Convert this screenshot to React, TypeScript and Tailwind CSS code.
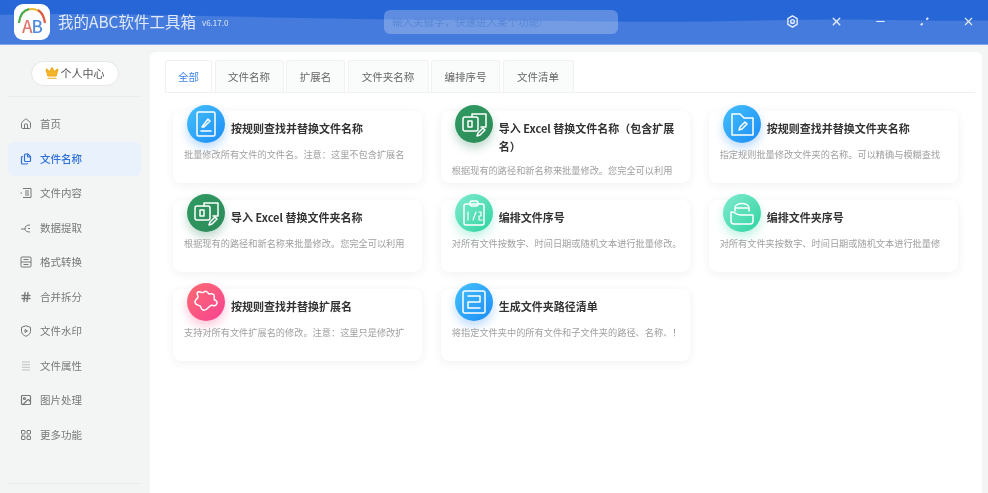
import type { ReactNode } from 'react'
import { ChevronDown, Crown, Hash, Home, Image, LayoutGrid, Minus, X, Files } from 'lucide-react'

const fontStack = "[font-family:'Noto_Sans_CJK_SC','Noto_Sans',sans-serif]"

const navItems = [
  { label: '首页', icon: <Home size={12} /> },
  { label: '文件名称', icon: <Files size={12} strokeWidth={2.4} />, active: true },
  {
    label: '文件内容',
    icon: (
      <svg viewBox="0 0 12 12" className="w-3 h-3" fill="none" stroke="currentColor">
        <path d="M3 1.5h8v9H3M5 4h4M5 6h4M5 8h4M0.5 6h1.5" />
      </svg>
    ),
  },
  {
    label: '数据提取',
    icon: (
      <svg viewBox="0 0 12 12" className="w-3 h-3" fill="none" stroke="currentColor">
        <path d="M1 7h4M5 7c0-3 2-4 5-4M5 7c0 2 2 3 5 3M8 6.500h2" />
      </svg>
    ),
  },
  {
    label: '格式转换',
    icon: (
      <svg viewBox="0 0 12 12" className="w-3 h-3" fill="none" stroke="currentColor">
        <rect x="1" y="1" width="10" height="10" rx="1" />
        <path d="M1 6h10M3.500 3.500h5M3.500 8.500h5" />
      </svg>
    ),
  },
  { label: '合并拆分', icon: <Hash size={12} strokeWidth={2.6} /> },
  {
    label: '文件水印',
    icon: (
      <svg viewBox="0 0 12 12" className="w-3 h-3" fill="none" stroke="currentColor">
        <path d="M6 .8l4.500 1.500v4c0 2.500-2 4-4.500 5-2.500-1-4.500-2.500-4.500-5v-4z" />
        <path d="M5 4.500l2.500 1.500L5 7.500z" />
      </svg>
    ),
  },
  {
    label: '文件属性',
    icon: (
      <svg viewBox="0 0 12 12" className="w-3 h-3 opacity-40" fill="none" stroke="currentColor">
        <path d="M2 2h8M2 4.700h8M2 7.300h8M2 10h8" />
      </svg>
    ),
  },
  { label: '图片处理', icon: <Image size={12} strokeWidth={2.4} /> },
  { label: '更多功能', icon: <LayoutGrid size={12} /> },
]

const tabs = [
  { label: '全部', width: 'w-[47px]' },
  { label: '文件名称', width: 'w-[69px]' },
  { label: '扩展名', width: 'w-[59px]' },
  { label: '文件夹名称', width: 'w-[81px]' },
  { label: '编排序号', width: 'w-[69px]' },
  { label: '文件清单', width: 'w-[71px]' },
]

const stroke = { fill: 'none', stroke: '#fff', strokeWidth: 1.5, strokeLinecap: 'round', strokeLinejoin: 'round' } as const

const blue = 'bg-gradient-to-br from-[#45c0fb] to-[#1c8cf5] shadow-[0_5px_10px_rgba(40,140,245,0.3)]'
const green = 'bg-gradient-to-br from-[#2f9a62] to-[#2c8a58] shadow-[0_5px_10px_rgba(40,130,90,0.3)]'
const mint = 'bg-gradient-to-br from-[#7debd0] to-[#22d3a0] shadow-[0_5px_10px_rgba(50,215,170,0.3)]'
const pink = 'bg-gradient-to-br from-[#fb6a6e] to-[#f83f93] shadow-[0_5px_10px_rgba(250,70,130,0.3)]'

const cards: { title: string; desc: string; color: string; icon: ReactNode }[] = [
  {
    title: '按规则查找并替换文件名称',
    desc: '批量修改所有文件的文件名。注意：这里不包含扩展名',
    color: blue,
    icon: (
      <>
        <rect x="10" y="7" width="18" height="24" rx="1.500" {...stroke} />
        <path d="M14 26h10M15 22l6-8 2 2-6 6z" {...stroke} />
      </>
    ),
  },
  {
    title: '导入 Excel 替换文件名称（包含扩展名）',
    desc: '根据现有的路径和新名称来批量修改。您完全可以利用',
    color: green,
    icon: (
      <>
        <path d="M17 12V9h14v13h-5" {...stroke} />
        <rect x="8" y="12" width="15" height="14" rx="2" {...stroke} />
        <path d="M13 16h4v6h-4zM22 31l3-1 5-5-2-2-5 5z" {...stroke} />
      </>
    ),
  },
  {
    title: '按规则查找并替换文件夹名称',
    desc: '指定规则批量修改文件夹的名称。可以精确与模糊查找',
    color: blue,
    icon: (
      <>
        <path d="M9 9h8l4 4h9v17H9z" {...stroke} />
        <path d="M16 25l1-3 5-5 2 2-5 5z" {...stroke} />
      </>
    ),
  },
  {
    title: '导入 Excel 替换文件夹名称',
    desc: '根据现有的路径和新名称来批量修改。您完全可以利用',
    color: green,
    icon: (
      <>
        <path d="M17 12V9h14v13h-5" {...stroke} />
        <rect x="8" y="12" width="15" height="14" rx="2" {...stroke} />
        <path d="M13 16h4v6h-4zM22 31l3-1 5-5-2-2-5 5z" {...stroke} />
      </>
    ),
  },
  {
    title: '编排文件序号',
    desc: '对所有文件按数字、时间日期或随机文本进行批量修改。',
    color: mint,
    icon: (
      <>
        <rect x="9" y="10" width="20" height="21" rx="2" {...stroke} />
        <rect x="15" y="7" width="8" height="5" rx="2" {...stroke} />
        <path d="M13 18v8M18 26l3-8M24 18h2v4h-2v4h3" {...stroke} strokeWidth={1.2} />
      </>
    ),
  },
  {
    title: '编排文件夹序号',
    desc: '对所有文件夹按数字、时间日期或随机文本进行批量修',
    color: mint,
    icon: (
      <>
        <path d="M8 18c6 0 4 3 10 3h12v6a3 3 0 0 1-3 3H11a3 3 0 0 1-3-3z" {...stroke} />
        <path d="M12 17v-3c0-6 14-6 14 0v3M12 14h14" {...stroke} />
      </>
    ),
  },
  {
    title: '按规则查找并替换扩展名',
    desc: '支持对所有文件扩展名的修改。注意：这里只是修改扩',
    color: pink,
    icon: (
      <path
        d="M17 9c2-2 4 1 5 2 2 0 4-1 5 1s-1 4 1 5 3 3 1 5-4-1-6 1-4 5-7 4-1-3-3-4-5-1-5-4 3-3 3-5-2-4 0-5 5 2 6 0z"
        {...stroke}
      />
    ),
  },
  {
    title: '生成文件夹路径清单',
    desc: '将指定文件夹中的所有文件和子文件夹的路径、名称、！',
    color: blue,
    icon: (
      <>
        <rect x="8" y="8" width="22" height="22" rx="2" {...stroke} />
        <path d="M13 13h12v6H13v6h12" {...stroke} />
      </>
    ),
  },
]

function Logo() {
  return (
    <div className="relative w-9 h-9 rounded-[9px] bg-white overflow-hidden">
      <svg viewBox="0 0 36 36" className="absolute inset-0 w-full h-full">
        <path d="M5 19C6 9 12 5 18 5s12 4 13 14" fill="none" stroke="#e9b93a" strokeWidth="2" />
        <path d="M5 19C6 9 10 6 15 5" fill="none" stroke="#3eae5d" strokeWidth="2" />
        <path d="M24 6c4 2 6 7 7 13" fill="none" stroke="#e2574c" strokeWidth="2" />
      </svg>
      <span className="absolute inset-x-0 top-[12px] text-center text-[17px] leading-[20px] font-medium tracking-[-1px]">
        <span className="text-[#e2776c]">A</span>
        <span className="text-[#4f8be0]">B</span>
      </span>
    </div>
  )
}

function Card({ title, desc, color, icon }: (typeof cards)[number]) {
  return (
    <div className="h-[72px] rounded-lg bg-white pl-[11px] pr-3 shadow-[0_2px_10px_rgba(40,60,90,0.07)]">
      <div className="flex items-start -mt-[6px]">
        <div className={`ml-[3px] w-[38px] h-[38px] shrink-0 rounded-full flex items-center justify-center ${color}`}>
          <svg viewBox="0 0 38 38" className="w-[38px] h-[38px]">{icon}</svg>
        </div>
        <div className="ml-[6px] mt-[14px] pb-[4px] text-[11px] leading-[18px] font-bold text-[#333]">{title}</div>
      </div>
      <div className="mt-[6px] h-[11px] whitespace-nowrap text-[9.2px] leading-[11px] text-[#a0a0a0]">{desc}</div>
    </div>
  )
}

export default function App() {
  return (
    <div className={`relative w-[988px] h-[493px] overflow-hidden bg-[#f3f5f5] blur-[0.6px] ${fontStack}`}>
      {/* title bar */}
      <div className="relative h-[45px] bg-[#2766d6] flex items-center border-b border-[#7fa8ea]">
        <svg viewBox="0 0 988 45" preserveAspectRatio="none" className="absolute inset-0 w-full h-full">
          <path d="M0 15C120 12 250 19 420 20S640 24 760 21 900 22 988 21V45H0z" fill="#457bdc" />
        </svg>
        <div className="relative ml-[14px]">
          <Logo />
        </div>
        <span className="relative ml-2 text-[15.5px] text-[#dfe9fa]">我的ABC软件工具箱</span>
        <span className="relative ml-[6px] mt-[2px] text-[8px] text-[#dfe9fa]">v6.17.0</span>
        <div className="absolute left-[384px] top-[10px] w-[234px] h-[24px] rounded-md bg-white/25 flex items-center justify-between pl-2 pr-[6px]">
          <span className="text-[10.5px] text-[#5a87d8]">输入关键字，快速进入某个功能!</span>
          <ChevronDown size={10} className="text-[#6f98e0]" />
        </div>
        <div className="absolute top-[15px] left-[786px] flex items-center gap-[31px] text-[#e6eefb]">
          <svg viewBox="0 0 14 14" className="w-[13px] h-[13px]" fill="none" stroke="currentColor" strokeWidth="1.5">
            <path d="M7 1l5 3v6l-5 3-5-3V4z" />
            <circle cx="7" cy="7" r="2" />
          </svg>
          <X size={13} strokeWidth={2.5} />
          <Minus size={13} strokeWidth={2} />
          <svg viewBox="0 0 14 14" className="w-[13px] h-[13px]" fill="none" stroke="currentColor" strokeWidth="2">
            <path d="M3 11l2-2M9 5l2-2" />
          </svg>
          <X size={13} strokeWidth={2} />
        </div>
      </div>

      <div className="flex h-[448px]">
        {/* sidebar */}
        <aside className="w-[149px] shrink-0 flex flex-col">
          <div className="mx-2 h-[52px] flex items-center justify-center border-b border-[#ebeded] pt-[5px]">
            <div className="w-[88px] h-[25px] rounded-full bg-white border border-[#e5e7e8] flex items-center justify-center gap-[2px] text-[11px] text-[#555]">
              <Crown size={14} className="text-[#f0a81e] fill-[#f5b52a]" />
              个人中心
            </div>
          </div>
          <nav className="mt-[10px] mx-2 flex flex-col">
            {navItems.map((item) => (
              <div
                key={item.label}
                className={`h-[34.5px] flex items-center pl-[12px] gap-[8px] rounded-md text-[10.5px] ${
                  item.active ? 'bg-[#e9f1fd] text-[#2f6fd8] font-medium' : 'text-[#777]'
                }`}
              >
                {item.icon}
                {item.label}
              </div>
            ))}
          </nav>
          <div className="mt-[31px] mx-2 border-t border-[#ebeded]" />
        </aside>

        {/* main panel */}
        <main className="ml-[1px] mt-[7px] w-[832px] h-[441px] rounded-t-md bg-white">
          <div className="ml-[15px] mr-[7px] mt-[9px] h-[32px] flex items-end gap-[2.5px] border-b border-[#f0f2f2]">
            {tabs.map((tab, i) => (
              <div
                key={tab.label}
                className={`${tab.width} h-[32px] flex items-center justify-center rounded-t-[3px] border border-b-0 border-[#f0f2f2] text-[10.5px] ${
                  i === 0 ? 'bg-white text-[#3f86ea]' : 'bg-[#fafbfb] text-[#666]'
                }`}
              >
                {tab.label}
              </div>
            ))}
          </div>
          <div className="mt-[18px] ml-[23px] w-[785px] grid grid-cols-3 gap-x-[18.5px] gap-y-[17px]">
            {cards.map((card) => (
              <Card key={card.title} {...card} />
            ))}
          </div>
        </main>
      </div>
    </div>
  )
}
